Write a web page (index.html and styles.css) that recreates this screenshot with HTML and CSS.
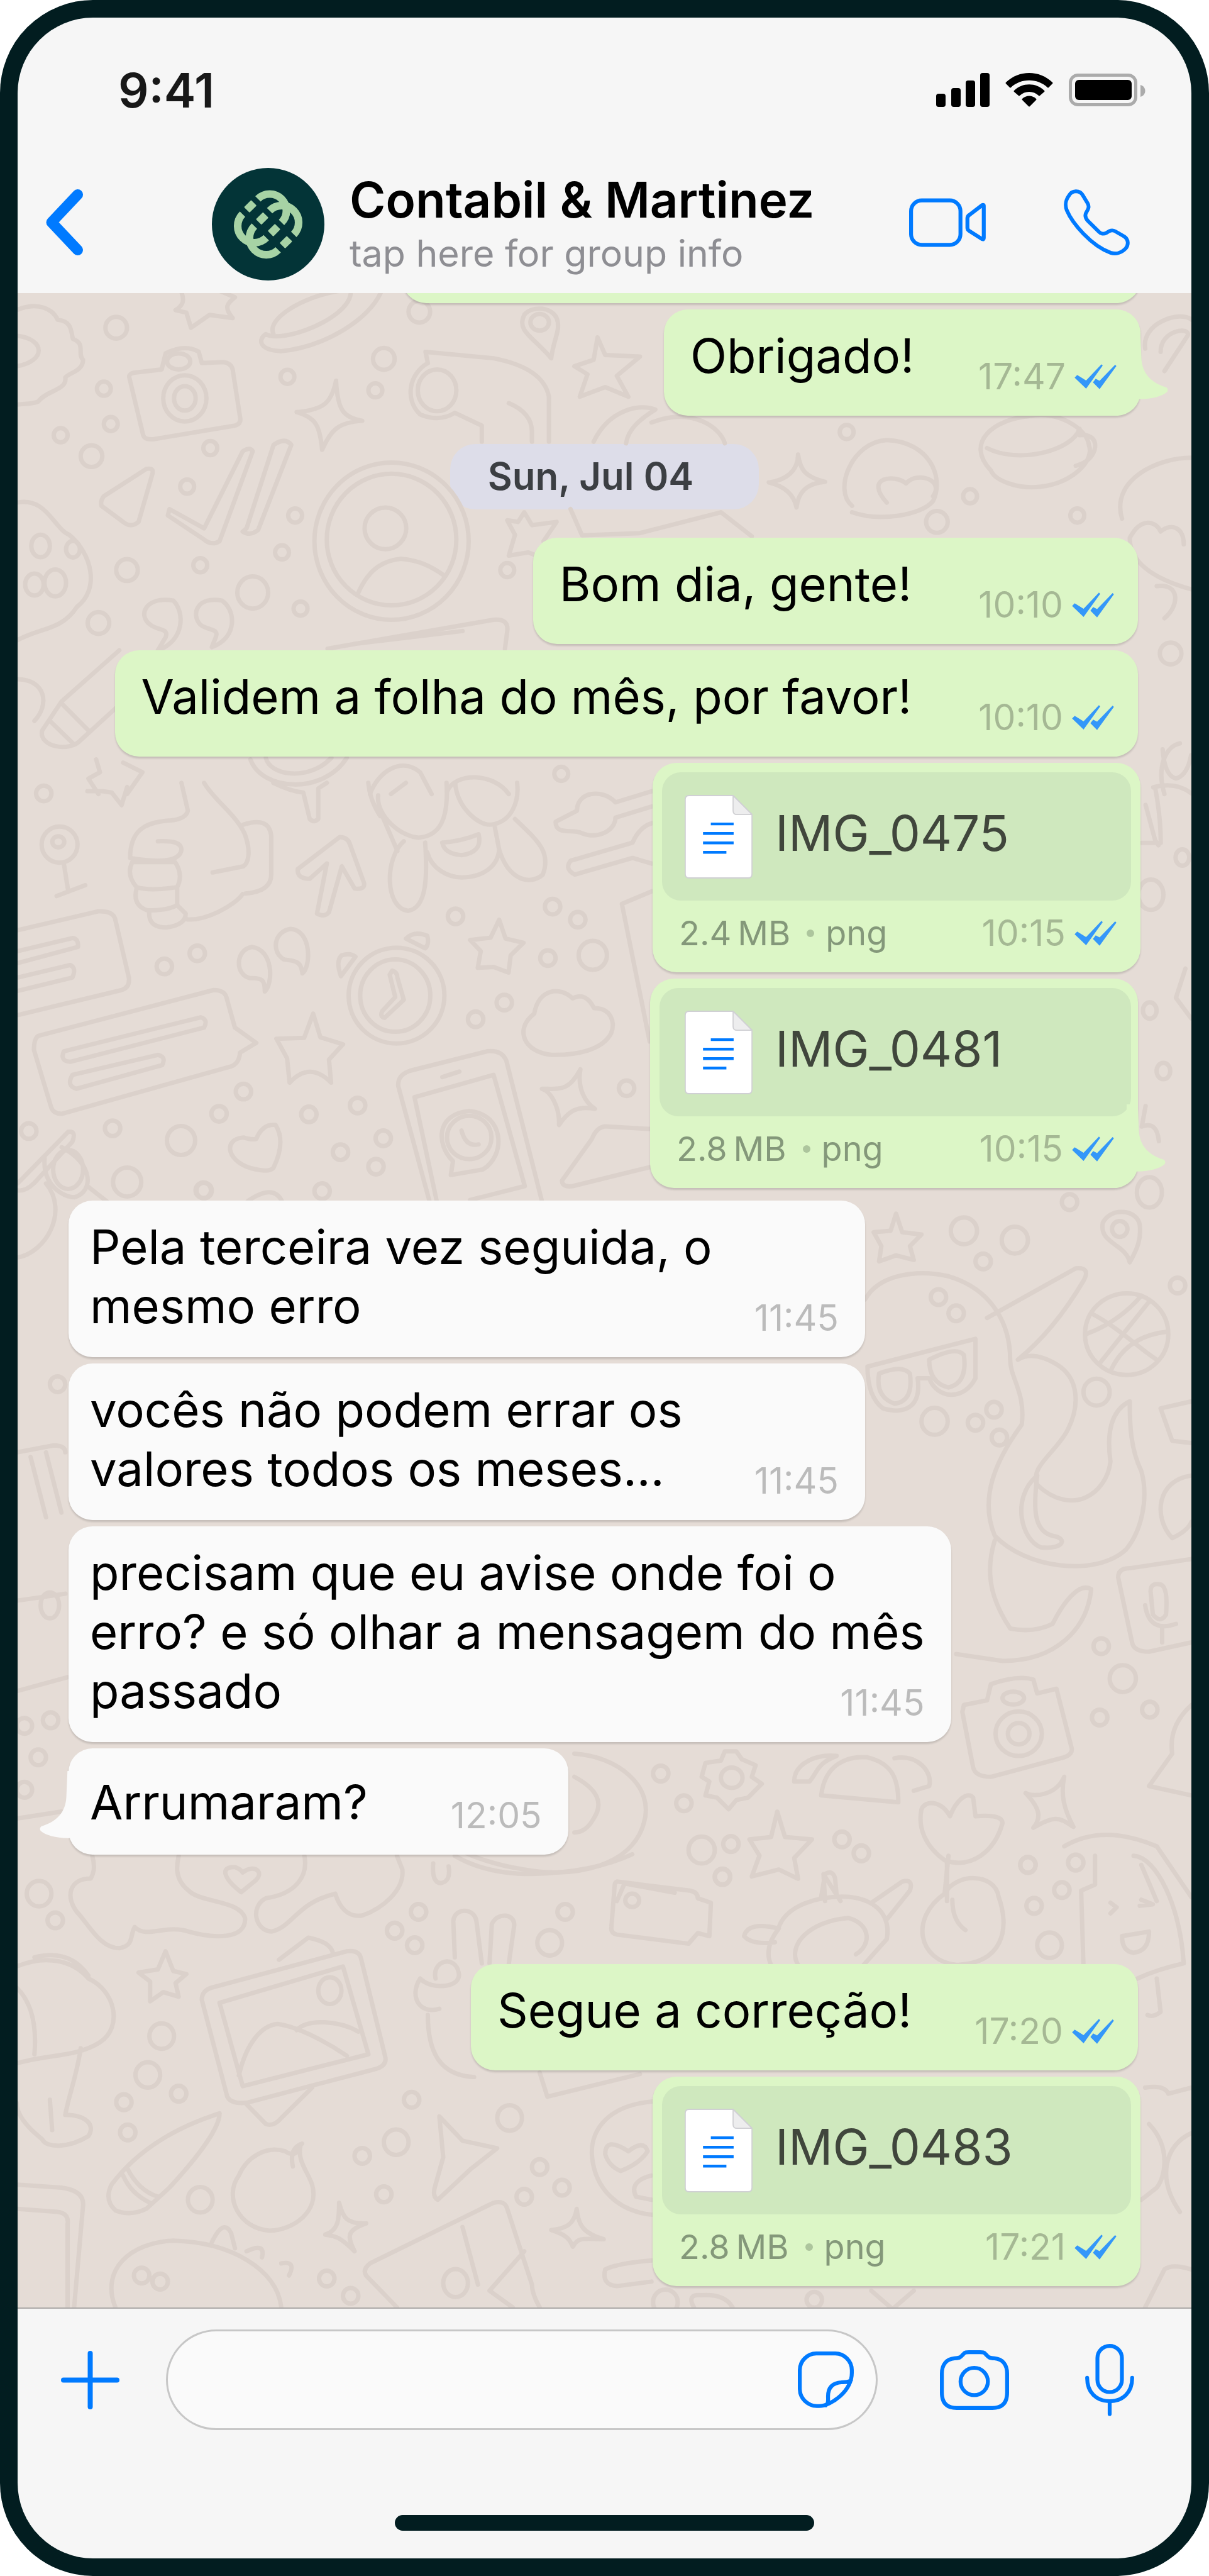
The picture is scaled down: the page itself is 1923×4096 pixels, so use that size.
FILE: index.html
```html
<!DOCTYPE html>
<html lang="pt-BR">
<head>
<meta charset="utf-8">
<meta name="viewport" content="width=device-width, initial-scale=1">
<title>Contabil &amp; Martinez</title>
<link rel="stylesheet" href="styles.css">
</head>
<body>
<svg class="sprite" aria-hidden="true">
  <symbol id="ticks" viewBox="665 262 226 136"><path d="M665 335L679 321L727 350L810 263L817 270L727 395ZM764 361L779 341L800 352L884 265L891 272L800 397Z"/></symbol>
  <symbol id="tail" viewBox="960 100 210 362"><path d="M960 100H1020L1026 240C1030 322 1076 370 1158 397C1170 403 1170 414 1164 422C1138 446 1084 459 1018 461H960Z"/></symbol>
  <symbol id="doc" viewBox="0 0 122 150">
    <path d="M8 1H87L121 35V142Q121 149 114 149H8Q1 149 1 142V8Q1 1 8 1Z" fill="#fff" stroke="#d0d0d4" stroke-width="2"/>
    <path d="M87 1V28Q87 35 94 35H121Z" fill="#ededee" stroke="#d0d0d4" stroke-width="2" stroke-linejoin="round"/>
    <path d="M47 52H88M33 69H88M33 86H88M33 103H75" stroke="#007aff" stroke-width="5"/>
  </symbol>
</svg>
<div class="phone">
  <header class="top">
    <div class="status">
      <span class="clock">9:41</span>
      <svg class="signal" viewBox="0 0 85 54"><rect y="33" width="15" height="21" rx="4"/><rect x="24" y="24" width="15" height="30" rx="4"/><rect x="47" y="12" width="15" height="42" rx="4"/><rect x="70" width="15" height="54" rx="4"/></svg>
      <svg class="wifi" viewBox="0 0 76 54"><path d="M1 15C22 -5 54 -5 75 15Q76 16 75 17L69 23Q68 24 67 23C51 8 25 8 9 23Q8 24 7 23L1 17Q0 16 1 15ZM14 28C27 15 49 15 62 28Q63 29 62 30L55 36Q54 37 53 36C45 28 31 28 23 36Q22 37 21 36L14 30Q13 29 14 28ZM27 41C33 35 43 35 49 41Q50 42 49 43L39 53Q38 54 37 53L27 43Q26 42 27 41Z"/></svg>
      <svg class="battery" viewBox="0 0 122 52"><rect x="2.500" y="2.500" width="104" height="47" rx="12" fill="none" stroke="#ababab" stroke-width="5"/><rect x="10" y="10" width="90" height="32" rx="6"/><path d="M114 18C124 21 124 34 114 37Z" fill="#ababab"/></svg>
    </div>
    <nav class="nav">
      <button class="icon-button back" aria-label="Back"><svg viewBox="0 0 59 105"><path d="M50.500 8.500L9 52.500L50.500 96.500" stroke-width="17"/></svg></button>
      <svg class="avatar" viewBox="27 31 606 606">
        <circle cx="330" cy="334" r="303" fill="#033437"/>
        <g fill="none" stroke="#a7d3a5" stroke-width="41">
          <path d="M275 198A88 88 0 0 1 402 325"/><path d="M338 261A90 90 0 0 1 468 389"/>
          <path d="M320 407A90 90 0 0 1 192 280"/><path d="M384 472A90 90 0 0 1 256 344"/>
        </g>
        <g fill="#a7d3a5">
          <rect x="-21" y="-27" width="42" height="54" rx="4" transform="translate(234 238) rotate(45)"/>
          <rect x="-21" y="-27" width="42" height="54" rx="4" transform="translate(298 303) rotate(45)"/>
          <rect x="-21" y="-27" width="42" height="54" rx="4" transform="translate(362 366) rotate(45)"/>
          <rect x="-21" y="-27" width="42" height="54" rx="4" transform="translate(426 431) rotate(45)"/>
        </g>
      </svg>
      <div class="contact">
        <h1 class="contact-name">Contabil &amp; Martinez</h1>
        <p class="contact-hint">tap here for group info</p>
      </div>
      <button class="icon-button video" aria-label="Video call"><svg viewBox="82 131 413 262"><g stroke-width="21"><rect x="92.500" y="142" width="266" height="240" rx="58"/><path d="M474 169L406 221Q396 228 396 238V290Q396 300 405 306L474 350Q484 355 484 345V172Q484 163 474 169Z"/></g></svg></button>
      <button class="icon-button call" aria-label="Voice call"><svg viewBox="914 63 354 354"><path stroke-width="20" d="M944 93C957 70 998 65 1014 92L1042 138C1055 162 1040 175 1033 190C1026 206 1030 218 1043 232L1102 290C1112 302 1128 304 1142 297C1157 288 1170 277 1190 288L1238 316C1262 332 1262 362 1246 380C1225 402 1195 413 1165 403C1060 365 960 245 930 175C918 143 924 120 944 93Z"/></svg></button>
    </nav>
  </header>

  <main class="chat">
    <svg class="doodles" viewBox="32 524 2100 3604" preserveAspectRatio="xMidYMin slice" aria-hidden="true">
      <defs>
        <ellipse id="dot-a" rx="9" ry="22"/><ellipse id="ring-a" rx="14" ry="34"/>
        <ellipse id="dot-b" rx="18" ry="28"/><ellipse id="ring-b" rx="33" ry="52"/>
        <ellipse id="dot-c" rx="10" ry="17"/><ellipse id="ring-c" rx="17" ry="29"/>
        <ellipse id="dot-d" rx="10" ry="26"/><ellipse id="ring-d" rx="16" ry="42"/>
      </defs>
      <g transform="translate(0 520) scale(1.380 .574)">
        <path d="M22 60C50 30 70 60 75 90C95 95 92 130 95 150C112 165 100 195 108 215C108 250 90 255 85 270C88 310 60 310 50 345C40 355 30 350 22 355M22 140C60 150 60 220 22 235"/>
        <path d="M235 0C240 30 238 45 228 60L242 68L248 115L272 75L302 85C290 50 295 40 305 20L285 0M440 0C390 20 345 90 355 135M495 0C480 90 420 175 365 188C335 185 335 150 345 135C365 165 450 90 455 10"/>
        <path d="M175 255L210 245L215 195Q240 165 258 190L262 225L290 222Q300 225 302 245L312 400Q312 420 300 422L200 462Q188 465 186 450L168 270Q167 258 175 255Z"/><ellipse cx="240" cy="335" rx="28" ry="72"/><ellipse cx="240" cy="335" rx="14" ry="38"/><ellipse cx="232" cy="220" rx="15" ry="25"/>
        <path d="M436 280C430 350 420 370 385 378C410 395 415 420 418 495C430 430 440 410 470 405C445 395 438 370 436 280Z"/>
        <path d="M715 210C690 140 670 125 680 75C690 45 715 50 722 85C728 120 718 150 715 210Z"/><ellipse cx="700" cy="98" rx="12" ry="26"/>
        <path d="M775 145L785 200L830 205L800 265L815 330L785 300L752 330L762 260L745 235L770 215ZM555 225L552 190L640 210Q705 240 712 330V470M555 225C530 260 525 340 545 385Q570 410 590 380L625 420V470M660 350Q690 380 690 440V470"/><ellipse cx="567" cy="310" rx="25" ry="65"/>
        <path d="M770 470C790 370 830 350 850 370C830 400 815 430 812 475M845 410C900 360 935 430 940 475"/>
        <path d="M135 640L190 555Q200 550 198 570L180 720Q170 740 160 720L132 670Q130 655 135 640ZM220 680L265 740L315 500Q325 485 328 500L285 780Q275 795 265 775L218 700ZM320 740L355 480Q370 455 378 480L335 745Q325 765 315 750Z"/>
        <ellipse cx="508" cy="780" rx="100" ry="245"/><ellipse cx="508" cy="775" rx="84" ry="205"/><ellipse cx="500" cy="740" rx="27" ry="65"/><path d="M465 940C480 860 500 840 520 835C545 840 560 860 575 885"/>
        <path d="M1035 510C1035 560 1020 590 997 597C1020 610 1030 640 1033 675C1035 630 1045 600 1070 595C1045 580 1038 560 1035 510ZM680 690L690 730L722 720L705 780L712 840L685 815L660 825L668 760L658 715L672 720ZM740 680L755 762L830 755L935 690L975 765"/>
        <path d="M1105 670C1080 620 1105 470 1150 465C1205 470 1225 580 1210 655C1195 700 1140 720 1105 690M1150 660C1120 580 1160 570 1175 600C1190 560 1225 590 1210 640"/>
        <path d="M1285 560C1250 470 1290 400 1335 390C1370 370 1410 430 1412 480C1420 530 1390 600 1350 610C1320 620 1290 590 1285 560ZM1280 490C1320 540 1390 500 1400 430M1400 450C1430 440 1425 530 1395 545"/>
        <path d="M1485 180C1480 100 1530 60 1545 90M1505 190C1505 120 1545 110 1540 140L1510 250M1455 710C1440 590 1500 520 1545 520M1545 930C1500 900 1465 850 1465 770C1480 700 1500 720 1505 750C1520 720 1535 740 1535 790"/>
        <path d="M22 660C60 640 70 740 90 760C120 820 130 930 100 985C80 1060 50 1050 22 1090M22 1210C60 1210 65 1290 45 1340"/><ellipse cx="53" cy="795" rx="12" ry="35"/><ellipse cx="95" cy="805" rx="9" ry="26"/><ellipse cx="45" cy="915" rx="12" ry="34"/><ellipse cx="72" cy="910" rx="14" ry="42"/>
        <path d="M225 965C190 950 178 1010 195 1040C205 1060 220 1050 215 1080L205 1120C240 1090 240 1000 225 965ZM288 965C255 950 248 1010 260 1040C270 1060 285 1050 280 1080L275 1110C310 1080 305 990 288 965ZM155 1120L80 1280L55 1370C50 1420 90 1440 105 1400L155 1290M80 1285L115 1370M65 1340L95 1410"/>
        <path d="M425 1115L640 1025Q660 1020 658 1060L655 1115M460 1100L600 1060M345 1455C350 1510 400 1530 430 1455M325 1460C340 1560 420 1570 450 1455M125 1460L130 1500L115 1520L128 1568M160 1470L185 1500L165 1568M480 1568C490 1500 520 1450 545 1500L560 1568M580 1560C590 1500 640 1500 660 1568"/>
        <path d="M1500 920C1530 910 1530 980 1510 1020M1510 1568C1500 1490 1510 1420 1530 1410"/>
        <use href="#ring-a" x="151" y="115"/><use href="#ring-a" x="544" y="65"/><use href="#ring-a" x="498" y="212"/><use href="#ring-a" x="119" y="515"/><use href="#ring-a" x="165" y="870"/><use href="#ring-a" x="128" y="1035"/><use href="#ring-a" x="1518" y="1130"/><use href="#ring-a" x="1215" y="720"/>
        <use href="#dot-a" x="373" y="268"/><use href="#dot-a" x="487" y="310"/><use href="#dot-a" x="79" y="450"/><use href="#dot-a" x="135" y="305"/><use href="#dot-a" x="273" y="490"/><use href="#dot-a" x="243" y="610"/><use href="#dot-a" x="144" y="415"/><use href="#dot-a" x="383" y="700"/><use href="#dot-a" x="366" y="815"/><use href="#dot-a" x="260" y="855"/><use href="#dot-a" x="390" y="990"/><use href="#dot-a" x="658" y="870"/><use href="#dot-a" x="1098" y="440"/><use href="#dot-a" x="1258" y="640"/><use href="#dot-a" x="1397" y="700"/><use href="#dot-a" x="728" y="1505"/><ellipse cx="328" cy="940" rx="20" ry="50"/>
      </g>
      <g transform="translate(0 1400) scale(.765 .4974)">
        <ellipse cx="140" cy="222" rx="42" ry="65"/><ellipse cx="137" cy="212" rx="14" ry="20"/><path d="M150 290L160 388M133 407L200 368"/>
        <path d="M205 30L240 30L262 35L285 80L298 15M425 0L440 100Q435 130 400 135C340 140 305 170 305 270Q420 300 425 240Q425 205 370 210M478 0C500 60 550 110 572 180C590 250 580 290 570 300L498 322M310 285H410Q430 330 415 375Q350 390 320 375Q295 330 310 285M320 380Q310 440 345 458Q390 460 415 440V380M350 460Q345 520 390 520Q435 510 435 470L415 440M435 490C480 500 550 440 568 400M570 150Q630 120 635 190V330Q635 390 575 398"/>
        <path d="M795 195Q815 195 820 225L852 360Q855 385 830 380L800 300L770 465Q760 485 742 470L765 290L725 345Q695 345 697 310ZM640 0Q680 30 710 35L725 130Q735 145 745 130L745 20L765 0"/>
        <path d="M862 0Q865 60 890 120M885 45C880 120 940 195 980 197C1030 190 1050 130 1045 0M915 40L950 0M1065 0C1070 90 1120 155 1150 150C1200 140 1215 60 1210 0M895 120L930 245M945 210C900 270 900 450 955 460C1000 450 1000 330 995 215M1000 250C1010 310 1050 340 1080 340C1130 340 1165 300 1168 240L1158 160M1168 240C1190 350 1240 370 1270 330C1290 250 1260 210 1205 130M1035 215Q1080 210 1120 185Q1130 250 1080 260Q1040 255 1035 215"/>
        <path d="M1525 30L1440 70C1410 20 1350 30 1350 100L1300 140C1300 190 1340 165 1360 180C1400 205 1440 170 1440 125L1525 85M1525 145Q1495 160 1480 215L1335 280Q1320 310 1345 330L1480 270L1525 290"/>
        <path d="M42 530L230 462Q265 460 270 490L302 700Q305 735 285 745L42 835M42 605L170 558Q185 560 183 590L42 648M42 700L165 655Q180 665 170 700L42 748"/>
        <path d="M90 910L500 745Q525 745 530 770L550 880L600 935L562 970Q560 1010 540 1020L145 1190Q125 1190 120 1165L80 960Q80 920 90 910ZM150 965L470 843Q488 850 478 880L165 1003Q140 1000 150 965ZM170 1050L370 978Q390 985 380 1015L180 1100Q155 1090 170 1050Z"/>
        <path d="M620 750C640 720 640 600 590 590C550 600 550 690 585 702C615 700 620 710 620 750ZM708 685C728 660 730 530 680 525C640 535 635 610 665 635C700 640 705 650 708 685Z"/>
        <ellipse cx="928" cy="765" rx="112" ry="172"/><ellipse cx="925" cy="765" rx="82" ry="130"/><path d="M918 675Q930 680 930 700L945 780L900 845Q888 840 895 820L925 770L912 690ZM950 560Q970 530 1000 550Q1005 580 995 595ZM798 695Q785 640 800 620Q820 610 832 625Z"/>
        <path d="M1168 492L1183 560L1225 575L1195 620L1190 682L1155 662L1118 665L1125 605L1100 565L1148 557ZM733 830L750 915L803 940L770 995L775 1078Q725 1000 678 1078L672 990L647 920L712 917Z"/>
        <path d="M1250 830C1260 740 1310 730 1340 775Q1370 750 1390 810C1430 810 1440 860 1430 900C1410 960 1350 980 1290 978C1230 970 1200 890 1250 830Z"/>
        <path d="M1005 1504L932 1090Q930 1050 960 1035L1140 965Q1175 960 1185 1000L1268 1504M1022 1504L970 1130L1155 1050L1228 1450L1100 1500M1035 1058L1075 1038"/><ellipse cx="1098" cy="1275" rx="52" ry="78"/><path d="M1055 1410L1060 1360C1020 1300 1020 1190 1098 1180C1180 1190 1185 1340 1130 1390ZM1080 1250Q1090 1310 1120 1300"/>
        <path d="M1358 1030C1350 1100 1370 1150 1392 1172C1350 1160 1330 1180 1308 1230C1310 1170 1290 1110 1268 1100C1310 1100 1330 1110 1358 1030ZM1525 1245L1415 1235Q1395 1240 1385 1280L1315 1430Q1315 1455 1340 1450L1525 1380M1525 390L1455 435L1520 930"/>
        <path d="M600 1280Q615 1225 645 1230Q670 1290 640 1385Q630 1400 600 1390C530 1370 520 1280 570 1275Q590 1285 600 1280ZM42 1440L160 1255Q180 1250 170 1290L80 1440Q60 1470 42 1465M105 1350C100 1450 150 1490 175 1490C220 1470 220 1370 145 1310M205 1450L250 1504M580 1504Q640 1440 660 1504"/><ellipse cx="160" cy="1390" rx="35" ry="70"/>
        <use href="#dot-b" x="103" y="38"/><use href="#dot-b" x="462" y="613"/><use href="#dot-b" x="385" y="660"/><use href="#dot-b" x="1066" y="480"/><use href="#dot-b" x="1293" y="445"/><use href="#dot-b" x="1352" y="492"/><use href="#ring-b" x="1387" y="620"/><use href="#dot-b" x="1282" y="630"/><use href="#dot-b" x="1180" y="790"/><use href="#dot-b" x="1113" y="850"/><use href="#dot-b" x="570" y="1110"/><use href="#dot-b" x="513" y="1190"/><use href="#dot-b" x="723" y="1192"/><use href="#dot-b" x="837" y="1160"/><use href="#dot-b" x="264" y="1242"/><use href="#dot-b" x="68" y="1252"/><use href="#ring-b" x="424" y="1286"/><use href="#dot-b" x="797" y="1328"/><use href="#dot-b" x="897" y="1278"/><use href="#dot-b" x="880" y="1380"/><use href="#ring-b" x="298" y="1435"/><use href="#dot-b" x="476" y="1465"/><use href="#dot-b" x="754" y="1468"/><use href="#dot-b" x="1466" y="1098"/>
      </g>
      <g transform="translate(1100 1340) scale(.6786 .523)">
        <path d="M1420 130Q1480 110 1520 150M1400 190L1425 310Q1440 340 1430 320H1390M1425 130Q1440 230 1440 320M1445 0Q1450 90 1480 100Q1510 90 1520 20M1505 750L1480 850L1520 920M1400 1220L1390 1290Q1430 1270 1435 1340"/>
        <use href="#dot-b" x="1497" y="370"/><use href="#ring-b" x="1414" y="497"/><use href="#dot-b" x="1411" y="893"/><use href="#dot-b" x="1447" y="1100"/><use href="#ring-b" x="1410" y="1515"/>
      </g>
      <g transform="translate(0 2100) scale(1.380 .829)">
        <path d="M1162 85L1170 125L1195 130L1180 155L1185 185L1162 175L1140 188L1143 155L1133 125L1155 122ZM1465 190C1460 150 1425 150 1430 105C1440 70 1475 75 1478 110C1480 140 1475 160 1465 190Z"/><ellipse cx="1452" cy="118" rx="10" ry="17"/>
        <path d="M1122 270C1140 215 1190 205 1230 220C1290 250 1310 330 1310 400C1310 440 1330 470 1325 540C1290 620 1270 700 1290 780C1330 850 1420 870 1460 810C1480 770 1490 700 1480 640C1465 590 1465 530 1465 490C1440 510 1435 560 1440 620C1435 690 1390 740 1345 670C1335 630 1370 600 1385 550C1400 500 1400 440 1370 410Q1340 380 1320 400M1280 310L1395 203Q1415 200 1405 230C1380 300 1350 360 1320 400M1345 650C1310 700 1325 790 1350 805C1380 810 1385 785 1365 780C1340 770 1340 720 1345 650M1290 790C1275 870 1290 930 1310 980Q1340 990 1365 970C1380 920 1400 880 1415 895C1410 980 1370 1050 1300 1050L1240 1035"/>
        <path d="M1125 415L1265 355V440C1250 490 1215 485 1205 440L1190 440C1195 500 1175 520 1145 505Q1125 480 1125 415M1140 430Q1170 410 1180 430Q1185 490 1160 495Q1135 480 1140 430ZM1205 400Q1240 370 1250 390Q1255 450 1230 460Q1205 450 1205 400Z"/>
        <ellipse cx="1461" cy="345" rx="54" ry="88"/><path d="M1415 300C1450 330 1480 380 1500 400M1490 275L1425 410M1408 345Q1450 320 1480 262M1440 425Q1460 350 1512 340"/>
        <path d="M1545 490L1505 505L1520 575L1545 580M1545 650C1500 660 1495 740 1520 785Q1540 770 1545 750M1450 870Q1450 850 1465 850L1545 830M1450 870L1468 1010Q1470 1030 1490 1030L1545 1010M1492 900Q1492 880 1505 885Q1515 890 1512 950Q1505 970 1495 950ZM1485 930Q1490 990 1525 970M1507 980V1010"/>
        <path d="M1250 1145L1280 1135L1285 1100Q1320 1080 1340 1090L1345 1120L1370 1110L1390 1240Q1390 1255 1375 1260L1285 1300Q1265 1300 1262 1280L1248 1160Z"/><ellipse cx="1321" cy="1207" rx="30" ry="48"/><ellipse cx="1321" cy="1207" rx="14" ry="23"/><ellipse cx="1314" cy="1130" rx="14" ry="14"/>
        <path d="M1545 1145Q1515 1190 1520 1250L1490 1320L1545 1340M1380 1300C1370 1340 1340 1345 1330 1335C1350 1370 1350 1390 1340 1410C1370 1380 1375 1390 1392 1408C1380 1370 1375 1340 1380 1300ZM1008 1375L1018 1430L1053 1435L1030 1475L1035 1520L1010 1500L975 1515L985 1470L972 1435L1000 1430Z"/>
        <path d="M915 1270L935 1265L940 1245H955L962 1262L980 1275L975 1300L988 1315L970 1345L955 1350L945 1370L930 1345L915 1340L920 1310L910 1300Z"/><ellipse cx="949" cy="1302" rx="14" ry="22"/>
        <path d="M1030 1310C1030 1270 1060 1250 1085 1255C1060 1270 1060 1290 1050 1310ZM1065 1340C1070 1270 1100 1255 1125 1258C1155 1270 1165 1300 1165 1355ZM1160 1260C1190 1250 1210 1290 1205 1320L1185 1330M1195 1370C1200 1350 1220 1350 1232 1385C1240 1350 1255 1330 1262 1345L1265 1385Q1300 1380 1300 1400C1290 1460 1260 1500 1225 1480C1200 1450 1190 1410 1195 1370ZM1228 1480V1568"/>
        <path d="M745 1250C800 1255 850 1320 835 1400C820 1490 750 1520 680 1500C640 1490 610 1470 600 1460M745 1300Q790 1340 770 1390Q760 1420 745 1420M800 1568L810 1530L875 1550M1380 1450Q1430 1400 1500 1450L1545 1560M1480 1490L1500 1568M1070 1568L1068 1510L1090 1568"/>
        <path d="M22 180C60 170 90 80 60 20M22 600L70 585Q85 585 85 600M40 610L60 740M60 600L80 730M22 920L85 905M22 1115L88 1085M22 1390L80 1375"/>
        <use href="#ring-c" x="1250" y="122"/><use href="#ring-c" x="1316" y="142"/><use href="#dot-c" x="1387" y="60"/><use href="#dot-c" x="1275" y="188"/><use href="#dot-c" x="1527" y="240"/><use href="#dot-c" x="1217" y="265"/><use href="#dot-c" x="1240" y="300"/><use href="#ring-c" x="1422" y="470"/><use href="#dot-c" x="1289" y="508"/><use href="#ring-c" x="1212" y="533"/><use href="#dot-c" x="1296" y="568"/><use href="#dot-c" x="1265" y="536"/><use href="#ring-c" x="1456" y="1088"/><use href="#dot-c" x="1428" y="1018"/><use href="#dot-c" x="1426" y="1172"/><use href="#dot-c" x="1491" y="1155"/><use href="#dot-c" x="887" y="1357"/><use href="#dot-c" x="857" y="1293"/><use href="#ring-c" x="910" y="1458"/><use href="#dot-c" x="948" y="1445"/><use href="#dot-c" x="937" y="1515"/><use href="#dot-c" x="1092" y="1435"/><use href="#dot-c" x="1117" y="1465"/><use href="#dot-c" x="1333" y="1490"/><use href="#dot-c" x="1395" y="1485"/><use href="#dot-c" x="50" y="1258"/><use href="#dot-c" x="32" y="1328"/><use href="#dot-c" x="32" y="1190"/><use href="#dot-c" x="66" y="1178"/><use href="#dot-c" x="75" y="453"/><ellipse cx="65" cy="930" rx="12" ry="28"/><use href="#dot-c" x="265" y="35"/>
      </g>
      <g transform="translate(0 3300) scale(1.380 .542)">
        <path d="M120 35C125 80 120 100 118 110C90 110 85 170 100 220C115 260 130 340 155 340C175 330 168 300 175 270C190 310 215 260 245 285C280 310 320 310 318 240C310 180 260 190 245 150C225 110 230 60 232 35M395 35C400 100 385 160 345 175C325 200 330 280 352 285C380 270 385 190 435 160C440 200 450 240 470 232C495 210 525 150 522 80L515 35M313 155C290 110 285 70 305 72Q313 80 315 90C330 60 345 90 330 120Z"/>
        <path d="M590 35Q630 95 690 95Q770 90 820 30M562 60Q560 125 572 125Q585 120 582 70"/>
        <path d="M800 120L895 150Q905 155 905 175L922 190L920 300L905 290L893 325L800 295Q792 290 793 270L797 140Q797 122 800 120Z"/><ellipse cx="820" cy="182" rx="9" ry="22"/>
        <path d="M215 350L225 415L242 425L228 455L232 500L212 485L195 515L195 450L180 420L205 410Z"/>
        <path d="M275 470L450 350Q465 345 468 370L500 700Q502 730 485 740L320 850Q300 855 295 830L262 510Q262 480 275 470ZM285 520L445 400L478 690L315 795ZM362 378L400 305Q430 320 432 358M320 855L345 920Q355 930 365 900L405 800M310 760C320 650 340 595 360 590C390 600 430 660 450 695M385 610C400 570 440 580 465 615"/><ellipse cx="428" cy="480" rx="15" ry="44"/>
        <path d="M590 370L588 250C590 205 615 205 618 250L625 390M635 390L638 260C645 220 668 225 667 265L660 390M565 440C560 380 590 360 595 420C600 470 560 480 545 440C530 500 545 560 570 540M555 560C555 680 570 760 615 765M700 750L710 830L830 755"/>
        <path d="M22 400C60 360 95 380 115 440C150 480 160 600 130 650C100 700 60 690 22 720M45 370Q90 340 115 430M22 470Q50 540 45 690M105 670C100 760 90 820 85 890C110 890 125 920 115 960C90 1000 60 1000 55 970C30 920 22 880 22 850M65 840L68 940M22 1120L80 1130Q110 1140 108 1190L95 1568M22 1200L75 1210Q90 1215 88 1250V1568"/>
        <path d="M285 885C285 930 260 1020 220 1130L190 1200Q170 1225 150 1205Q135 1170 145 1120C180 1000 230 930 285 885ZM165 1065Q180 1140 205 1160M160 1090Q170 1150 195 1180M390 990C385 1040 400 1080 405 1120C415 1210 380 1270 350 1272C310 1265 290 1160 310 1090C320 1030 345 990 370 1010Q385 1035 390 990ZM380 1060Q375 1000 392 985"/>
        <path d="M570 895L600 975L645 1000L610 1070L568 1170Q560 1160 565 1120L575 1030ZM848 845C780 860 765 960 768 1030C772 1130 800 1210 848 1220M840 1010Q835 970 815 1010Q785 960 785 1020Q790 1060 805 1075Q830 1050 840 1010ZM845 1090Q815 1110 825 1160L845 1170"/>
        <path d="M440 1180C445 1230 450 1250 475 1248C450 1270 450 1290 460 1340C440 1290 435 1290 422 1285C440 1270 440 1230 440 1180ZM748 1200C745 1250 735 1265 715 1270C740 1290 740 1310 743 1325C750 1290 760 1300 783 1300C755 1280 750 1250 748 1200ZM475 1420Q470 1400 480 1380L640 1180Q655 1170 658 1200L690 1450Q690 1480 700 1525M475 1420L515 1525M600 1260L620 1450M680 1340L635 1470L665 1525"/><ellipse cx="591" cy="1445" rx="16" ry="46"/>
        <path d="M150 1525C130 1400 170 1310 225 1305C300 1310 360 1400 365 1525M275 1310Q290 1230 300 1280L305 1330M320 1340Q345 1310 340 1360M365 1380Q385 1370 375 1420M785 1400Q800 1380 845 1370M785 1400Q780 1450 800 1455L845 1440M900 1525Q890 1480 910 1485Q940 1480 950 1525"/>
        <path d="M1010 270C1020 200 1060 165 1100 170C1140 180 1155 240 1150 310L1120 395M1035 395C1020 330 1050 250 1100 240C1130 260 1130 330 1110 360M1065 170L1070 95Q1080 80 1083 110L1085 165M1130 190L1170 120Q1185 110 1180 150L1150 245M1010 275Q970 250 965 300Q975 330 1005 320M1000 395Q990 340 1010 275"/>
        <path d="M1230 35L1225 160C1240 90 1290 90 1295 170C1310 280 1300 390 1240 395C1190 380 1180 240 1225 160M1235 180Q1235 250 1252 280M1405 400L1402 150L1420 130V35M1470 35C1500 40 1530 200 1535 390Q1500 410 1475 440M1480 180L1495 195L1478 200M1440 190L1448 205L1440 225M1455 300L1490 285Q1490 350 1470 355Q1455 350 1455 300M1500 440L1505 550Q1495 570 1488 560M1485 800Q1510 790 1515 820L1545 800M1490 920C1520 1000 1510 1100 1500 1130L1480 1170M1530 1210C1500 1100 1510 990 1545 950M1485 1525L1510 1400Q1520 1380 1545 1400M1130 1470L1155 1525M1185 1470L1160 1525"/>
        <use href="#dot-d" x="543" y="220"/><use href="#dot-d" x="733" y="220"/><use href="#dot-d" x="512" y="282"/><use href="#ring-d" x="713" y="322"/><use href="#dot-d" x="538" y="330"/><use href="#ring-d" x="51" y="160"/><use href="#dot-d" x="72" y="248"/><use href="#ring-d" x="210" y="630"/><use href="#ring-d" x="192" y="758"/><use href="#dot-d" x="232" y="820"/><use href="#dot-d" x="161" y="848"/><use href="#dot-d" x="166" y="948"/><use href="#dot-d" x="534" y="840"/><use href="#ring-d" x="661" y="900"/><use href="#ring-d" x="514" y="980"/><use href="#dot-d" x="470" y="1025"/><use href="#dot-d" x="700" y="1062"/><use href="#dot-d" x="729" y="1130"/><use href="#dot-d" x="680" y="1160"/><use href="#ring-d" x="260" y="1170"/><use href="#dot-d" x="498" y="1152"/><use href="#dot-d" x="424" y="1430"/><use href="#dot-d" x="455" y="1487"/><use href="#ring-d" x="1361" y="330"/><use href="#dot-d" x="1341" y="200"/><use href="#dot-d" x="1377" y="148"/><use href="#dot-d" x="1333" y="65"/><use href="#dot-d" x="937" y="105"/><use href="#dot-d" x="184" y="1420"/><use href="#dot-d" x="208" y="1440"/><use href="#ring-d" x="863" y="1508"/><use href="#dot-d" x="1056" y="1500"/>
      </g>
    </svg>

    <article class="message sent clipped"></article>
    <article class="message sent tailed">
      <p class="text">Obrigado!</p><div class="meta"><time>17:47</time><svg class="ticks"><use href="#ticks"/></svg></div>
      <svg class="tail"><use href="#tail"/></svg>
    </article>
    <div class="date">Sun, Jul 04</div>
    <article class="message sent inset">
      <p class="text">Bom dia, gente!</p><div class="meta"><time>10:10</time><svg class="ticks"><use href="#ticks"/></svg></div>
    </article>
    <article class="message sent inset">
      <p class="text">Validem a folha do mês, por favor!</p><div class="meta"><time>10:10</time><svg class="ticks"><use href="#ticks"/></svg></div>
    </article>
    <article class="message sent attachment">
      <a class="file" href="#"><svg class="doc"><use href="#doc"/></svg><span class="file-name">IMG_0475</span></a>
      <div class="file-info"><span>2.4&#8201;MB</span><i class="bullet"></i><span>png</span><div class="meta"><time>10:15</time><svg class="ticks"><use href="#ticks"/></svg></div></div>
    </article>
    <article class="message sent attachment inset tailed">
      <a class="file" href="#"><svg class="doc"><use href="#doc"/></svg><span class="file-name">IMG_0481</span></a>
      <div class="file-info"><span>2.8&#8201;MB</span><i class="bullet"></i><span>png</span><div class="meta"><time>10:15</time><svg class="ticks"><use href="#ticks"/></svg></div></div>
      <svg class="tail"><use href="#tail"/></svg>
    </article>
    <article class="message received stacked wide turn">
      <p class="text">Pela terceira vez seguida, o<br>mesmo erro</p><div class="meta"><time>11:45</time></div>
    </article>
    <article class="message received stacked wide">
      <p class="text">vocês não podem errar os<br>valores todos os meses...</p><div class="meta"><time>11:45</time></div>
    </article>
    <article class="message received stacked">
      <p class="text">precisam que eu avise onde foi o<br>erro? e só olhar a mensagem do mês<br>passado</p><div class="meta"><time>11:45</time></div>
    </article>
    <article class="message received tailed">
      <p class="text">Arrumaram?</p><div class="meta"><time>12:05</time></div>
      <svg class="tail"><use href="#tail"/></svg>
    </article>
    <article class="message sent inset later">
      <p class="text">Segue a correção!</p><div class="meta"><time>17:20</time><svg class="ticks"><use href="#ticks"/></svg></div>
    </article>
    <article class="message sent attachment">
      <a class="file" href="#"><svg class="doc"><use href="#doc"/></svg><span class="file-name">IMG_0483</span></a>
      <div class="file-info"><span>2.8&#8201;MB</span><i class="bullet"></i><span>png</span><div class="meta"><time>17:21</time><svg class="ticks"><use href="#ticks"/></svg></div></div>
    </article>
  </main>

  <footer class="bottom">
    <form class="composer">
      <button type="button" class="icon-button plus" aria-label="Attach"><svg viewBox="0 0 93 93"><path d="M46.500 4V89M4 46.500H89" stroke-width="8"/></svg></button>
      <div class="field">
        <input class="field-input" type="text" aria-label="Message">
        <button type="button" class="icon-button sticker" aria-label="Stickers"><svg viewBox="0 0 100 101"><path stroke-width="7" d="M33 3.500H67A30 30 0 0 1 96.500 33V38C96.500 70 60 97.400 38 97.400H34A31 31 0 0 1 3.500 66V33A30 30 0 0 1 33 3.500ZM95 51C92 55 88 54 78 55C62 56 54 64 54 80C54 88 55 92 50 96"/></svg></button>
      </div>
      <button type="button" class="icon-button camera" aria-label="Camera"><svg viewBox="0 0 124 107"><g stroke-width="7"><path d="M3.500 42C3.500 25 12 16 26 14.500C38 14 38 11 42 7C45 3.500 47 3.500 52 3.500H72C77 3.500 79 3.500 82 7C86 11 86 14 98 14.500C112 16 120.500 25 120.500 42V76C120.500 94 112 103.500 94 103.500H30C12 103.500 3.500 94 3.500 76Z"/><circle cx="61.500" cy="56" r="24.500"/></g></svg></button>
      <button type="button" class="icon-button mic" aria-label="Record"><svg viewBox="0 0 88 130"><g stroke-width="7"><rect x="22" y="3.500" width="44" height="83" rx="22"/><path d="M3.500 61C3.500 87 20 103 44 103C68 103 84.500 87 84.500 61M44 103V126"/></g></svg></button>
    </form>
    <div class="home-bar"></div>
  </footer>
</div>
</body>
</html>
```
FILE: styles.css
```css
* { box-sizing: border-box; }

body {
  margin: 0;
  background: #fff;
  font-family: Inter, "Liberation Sans", sans-serif;
  color: #000;
}

h1, p { margin: 0; }

svg { display: block; flex: none; }

.sprite { position: absolute; width: 0; height: 0; }

.phone {
  display: flex;
  flex-direction: column;
  min-height: 100vh;
  border: 28px solid #021d20;
  border-radius: 148px;
  background: #021d20;
  overflow: hidden;
}

/* Header */
.top { background: #f6f6f6; }

.status {
  display: flex;
  align-items: center;
  gap: 25px;
  height: 219px;
  padding: 11px 73px 0 160px;
}
.clock {
  margin-right: auto;
  font-size: 76px;
  font-weight: 600;
  line-height: 92px;
  color: #181818;
}
.signal { width: 85px; height: 54px; }
.wifi { width: 76px; height: 54px; }
.battery { width: 122px; height: 52px; }

.nav {
  display: flex;
  align-items: center;
  height: 219px;
  padding: 0 98px 0 45px;
}

.icon-button {
  display: block;
  flex: none;
  padding: 0;
  border: 0;
  background: none;
}
.icon-button svg {
  width: 100%;
  height: 100%;
  fill: none;
  stroke: #007aff;
  stroke-linecap: round;
  stroke-linejoin: round;
}
.nav .icon-button { margin-bottom: 6px; }
.back { width: 59px; height: 105px; }
.video { width: 122px; height: 78px; }
.call { width: 105px; height: 105px; margin-left: 124px; }

.avatar { width: 179px; height: 179px; margin-left: 205px; }

.contact {
  flex: 1;
  margin: 0 0 4px 40px;
  white-space: nowrap;
}
.contact-name {
  font-size: 78px;
  font-weight: 600;
  line-height: 92px;
}
.contact-hint {
  margin-top: 4px;
  font-size: 59px;
  line-height: 70px;
  color: #8e8e93;
}

/* Conversation */
.chat {
  position: relative;
  display: flex;
  flex: 1;
  flex-direction: column;
  align-items: flex-end;
  gap: 10px;
  padding: 0 81px 34px;
  background: #e5dcd6;
  overflow: hidden;
}
.doodles {
  position: absolute;
  inset: 0;
  width: 100%;
  height: 100%;
  fill: none;
  stroke: #dbd1cb;
  stroke-width: 7px;
  stroke-linecap: round;
  stroke-linejoin: round;
}
.doodles * { vector-effect: non-scaling-stroke; }

.message {
  position: relative;
  display: flex;
  justify-content: space-between;
  min-height: 169px;
  border-radius: 38px;
  box-shadow: 0 3px 3px rgba(0, 0, 0, .14);
}
.sent {
  gap: 96px;
  padding: 26px 38px 30px 42px;
  background: #dcf6c6;
}
.received {
  align-self: flex-start;
  align-items: center;
  gap: 132px;
  padding: 0 42px 0 34px;
  background: #fafafa;
}
.inset { margin-right: 4px; }
.turn { margin-top: 10px; }
.later { margin-top: 164px; }

.clipped {
  width: 1174px;
  min-height: 80px;
  margin-top: -64px;
  padding: 0;
}

.text {
  font-size: 76px;
  line-height: 94px;
  white-space: nowrap;
}

.meta {
  display: flex;
  align-items: center;
  align-self: flex-end;
  gap: 14px;
  font-size: 57px;
  line-height: 64px;
  color: rgba(0, 0, 0, .25);
}
.meta time {
  min-width: 145px;
  text-align: right;
}
.received .meta { margin-bottom: 30px; }
.ticks {
  width: 67px;
  height: 40px;
  fill: #3497f9;
}

.stacked {
  display: grid;
  grid-template-columns: 1fr;
}
.stacked .text {
  grid-area: 1 / 1;
  padding: 26px 0 35px;
}
.stacked .meta {
  grid-area: 1 / 1;
  justify-self: end;
}
.wide { min-width: 1267px; }

.tail {
  position: absolute;
  right: -44px;
  bottom: 26px;
  width: 62px;
  height: 107px;
  fill: #dcf6c6;
}
.received .tail {
  right: auto;
  left: -46px;
  fill: #fafafa;
  transform: scaleX(-1);
}

.date {
  align-self: center;
  margin: 35px 0;
  padding: 16px 104px 18px 60px;
  border-radius: 40px;
  background: #dddde9;
  font-size: 60px;
  font-weight: 600;
  line-height: 70px;
  color: #3c3f43;
}

/* Attachments */
.attachment {
  flex-direction: column;
  justify-content: flex-start;
  gap: 20px;
  width: 776px;
  padding: 15px 15px 30px;
}
.attachment.inset { padding-right: 11px; }
.file {
  display: flex;
  align-items: center;
  gap: 36px;
  height: 204px;
  padding-left: 36px;
  border-radius: 30px;
  background: #cfe8be;
  color: #40463c;
  text-decoration: none;
}
.attachment.inset .file { padding-left: 40px; }
.doc { width: 108px; height: 133px; }
.file-name {
  padding-bottom: 10px;
  font-size: 78px;
  line-height: 94px;
}
.file-info {
  display: flex;
  align-items: center;
  padding: 0 23px 0 27px;
  font-size: 54px;
  line-height: 64px;
  color: #84987a;
}
.file-info .meta { margin-left: auto; }
.attachment.inset .file-info { padding-right: 27px; }
.bullet {
  width: 12px;
  height: 12px;
  margin: 0 18px 0 26px;
  border-radius: 50%;
  background: #adc59d;
}

/* Footer */
.bottom {
  display: flex;
  flex-direction: column;
  align-items: center;
  justify-content: space-between;
  height: 399px;
  padding: 33px 0 44px;
  border-top: 2px solid #acaaa9;
  background: #f6f6f6;
}
.composer {
  display: flex;
  align-items: center;
  align-self: stretch;
  padding: 0 91px 0 69px;
}
.plus { width: 93px; height: 93px; }
.field {
  display: flex;
  flex: 1;
  align-items: center;
  min-width: 0;
  height: 160px;
  margin: 0 99px 0 74px;
  padding: 0 35px 0 70px;
  border: 3px solid #c7c7c7;
  border-radius: 80px;
  background: #fafafa;
}
.field-input {
  flex: 1;
  min-width: 0;
  padding: 0;
  border: 0;
  outline: 0;
  background: none;
  font: 76px/94px Inter, sans-serif;
}
.sticker { width: 89px; height: 90px; }
.camera { width: 110px; height: 95px; }
.mic { width: 78px; height: 115px; margin-left: 121px; }

.home-bar {
  width: 667px;
  height: 25px;
  border-radius: 13px;
  background: #021d20;
}
```
